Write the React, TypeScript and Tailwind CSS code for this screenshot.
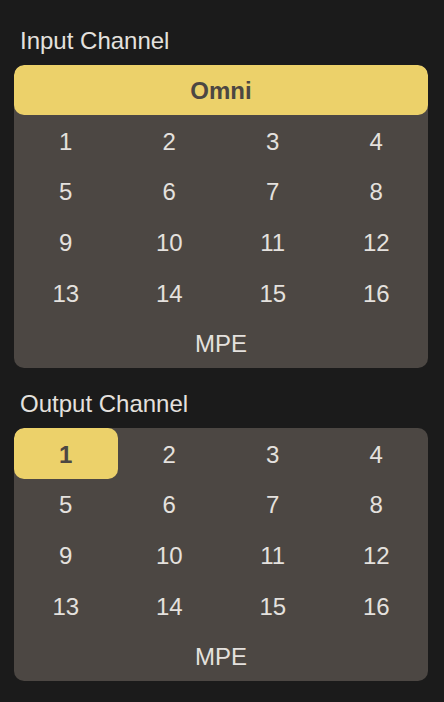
import React from "react";

const nums = Array.from({ length: 16 }, (_, i) => i + 1);

function Section({ title, omni, selected }: { title: string; omni: boolean; selected: number | null }) {
  return (
    <div className="flex flex-col">
      <div className="h-6 leading-6 pl-[20px] text-[24px] text-[#e4e1de] mb-3">{title}</div>
      <div className="ml-[14px] mr-[16px] rounded-[10px] bg-[#4c4743] overflow-hidden">
        {omni && (
          <div className="h-[50px] pt-[2px] rounded-[10px] bg-[#ecd16a] flex items-center justify-center text-[24px] font-bold text-[#4c4743]">
            Omni
          </div>
        )}
        <div className="grid grid-cols-4">
          {nums.map((n) => (
            <div
              key={n}
              className={
                n === selected
                  ? "h-[50.6px] pt-[3px] rounded-[10px] bg-[#ecd16a] flex items-center justify-center text-[24px] font-bold text-[#4c4743]"
                  : "h-[50.6px] pt-[3px] flex items-center justify-center text-[24px] text-[#e4e1de]"
              }
            >
              {n}
            </div>
          ))}
        </div>
        <div className="h-[50.6px] pt-[3px] flex items-center justify-center text-[24px] text-[#e4e1de]">MPE</div>
      </div>
    </div>
  );
}

export default function App() {
  return (
    <div
      className="w-[444px] h-[702px] bg-[#1b1b1b] pt-[29px] flex flex-col gap-[24px]"
      style={{ fontFamily: '"Liberation Sans", Arial, sans-serif' }}
    >
      <Section title="Input Channel" omni={true} selected={null} />
      <Section title="Output Channel" omni={false} selected={1} />
    </div>
  );
}
